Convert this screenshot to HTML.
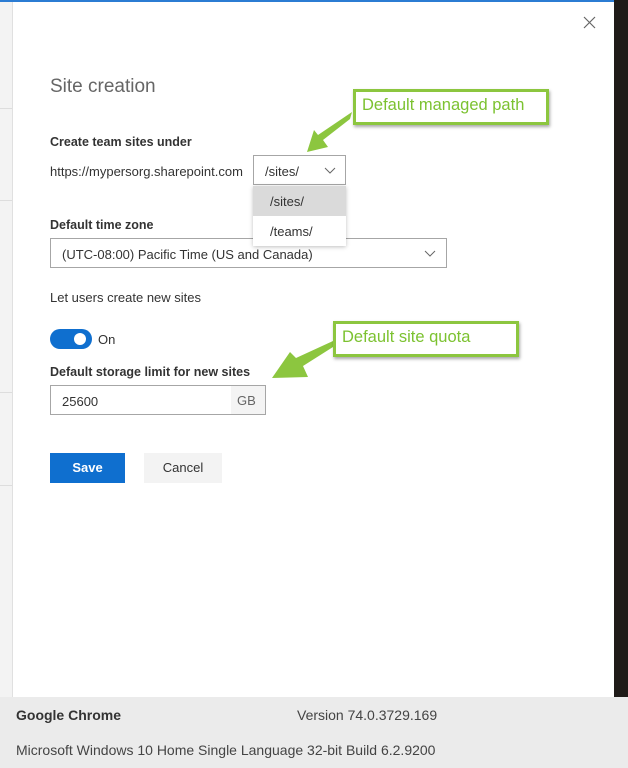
<!DOCTYPE html>
<html><head><meta charset="utf-8"><style>
*{margin:0;padding:0;box-sizing:border-box}
body{width:628px;height:768px;position:relative;overflow:hidden;background:#fff;font-family:"Liberation Sans",sans-serif;color:#333}
.a{position:absolute}
.lbl{font-size:12.5px;font-weight:bold;color:#333}
.t{font-size:13px;color:#333}
.box{border:1px solid #a6a6a6;background:#fff}
.callout{border:3px solid #8cc63f;background:#fff;color:#7cc230;font-size:16.5px;box-shadow:1px 2px 3px rgba(0,0,0,.35);padding-left:6px;line-height:26px}
</style></head><body>
<div class="a" style="left:0;top:0;width:13px;height:697px;background:#f3f3f3"></div>
<div class="a" style="left:0;top:108px;width:12px;height:1px;background:#ddd"></div>
<div class="a" style="left:0;top:200px;width:12px;height:1px;background:#ddd"></div>
<div class="a" style="left:0;top:392px;width:12px;height:1px;background:#ddd"></div>
<div class="a" style="left:0;top:485px;width:12px;height:1px;background:#ddd"></div>
<div class="a" style="left:12px;top:0;width:1px;height:697px;background:#e0e0e0"></div>
<div class="a" style="left:614px;top:0;width:14px;height:697px;background:#1f1b18"></div>
<div class="a" style="left:0;top:0;width:614px;height:2px;background:#2b7cd3"></div>
<svg class="a" style="left:583px;top:16px" width="13" height="13"><path d="M1 1L12 12M12 1L1 12" stroke="#666" stroke-width="1.2"/></svg>
<div class="a" style="left:50px;top:76px;font-size:19px;color:#666">Site creation</div>
<div class="a lbl" style="left:50px;top:135px">Create team sites under</div>
<div class="a t" style="left:50px;top:164px">https://mypersorg.sharepoint.com</div>
<div class="a lbl" style="left:50px;top:218px">Default time zone</div>
<div class="a box" style="left:50px;top:238px;width:397px;height:30px"><span class="a t" style="left:11px;top:8px">(UTC-08:00) Pacific Time (US and Canada)</span>
<svg class="a" style="left:373px;top:11px" width="12" height="8"><path d="M1 1L6 6L11 1" stroke="#666" fill="none"/></svg></div>
<div class="a box" style="left:253px;top:155px;width:93px;height:30px"><span class="a t" style="left:11px;top:8px">/sites/</span>
<svg class="a" style="left:70px;top:11px" width="12" height="8"><path d="M1 1L6 6L11 1" stroke="#666" fill="none"/></svg></div>
<div class="a" style="left:253px;top:186px;width:93px;height:60px;background:#fff;box-shadow:0 1px 4px rgba(0,0,0,.25);z-index:5">
<div style="height:30px;background:#dadada;padding:8px 0 0 17px" class="t">/sites/</div>
<div style="height:30px;padding:8px 0 0 17px" class="t">/teams/</div></div>
<div class="a t" style="left:50px;top:290px">Let users create new sites</div>
<div class="a" style="left:50px;top:329px;width:42px;height:20px;border-radius:10px;background:#0f6fcf"><div class="a" style="left:24px;top:4px;width:12px;height:12px;border-radius:6px;background:#fff"></div></div>
<div class="a t" style="left:98px;top:332px">On</div>
<div class="a lbl" style="left:50px;top:365px">Default storage limit for new sites</div>
<div class="a box" style="left:50px;top:385px;width:216px;height:30px"><span class="a t" style="left:11px;top:8px">25600</span>
<div class="a" style="left:180px;top:0;width:34px;height:28px;background:#f4f4f4;color:#666;font-size:13px;padding:7px 0 0 6px">GB</div></div>
<div class="a" style="left:50px;top:453px;width:75px;height:30px;background:#0f6fcf;color:#fff;font-size:13px;font-weight:bold;text-align:center;line-height:30px">Save</div>
<div class="a" style="left:144px;top:453px;width:78px;height:30px;background:#f3f3f3;color:#333;font-size:13px;text-align:center;line-height:30px">Cancel</div>
<div class="a callout" style="left:353px;top:89px;width:196px;height:36px">Default managed path</div>
<svg class="a" style="left:0;top:0" width="628" height="400"><path d="M352 112L350 119L323 140L328 147L307 152L314 130L318 135Z" fill="#8cc63f"/>
<path d="M333 341L333 347L303 366L308 377L272 378L290 352L296 358Z" fill="#8cc63f"/></svg>
<div class="a callout" style="left:333px;top:321px;width:186px;height:36px">Default site quota</div>
<div class="a" style="left:0;top:697px;width:628px;height:71px;background:#ebebeb"></div>
<div class="a" style="left:16px;top:707px;font-size:14px;font-weight:bold;color:#333">Google Chrome</div>
<div class="a" style="left:297px;top:707px;font-size:14px;color:#444">Version 74.0.3729.169</div>
<div class="a" style="left:16px;top:742px;font-size:14px;color:#444">Microsoft Windows 10 Home Single Language 32-bit Build 6.2.9200</div>
</body></html>
